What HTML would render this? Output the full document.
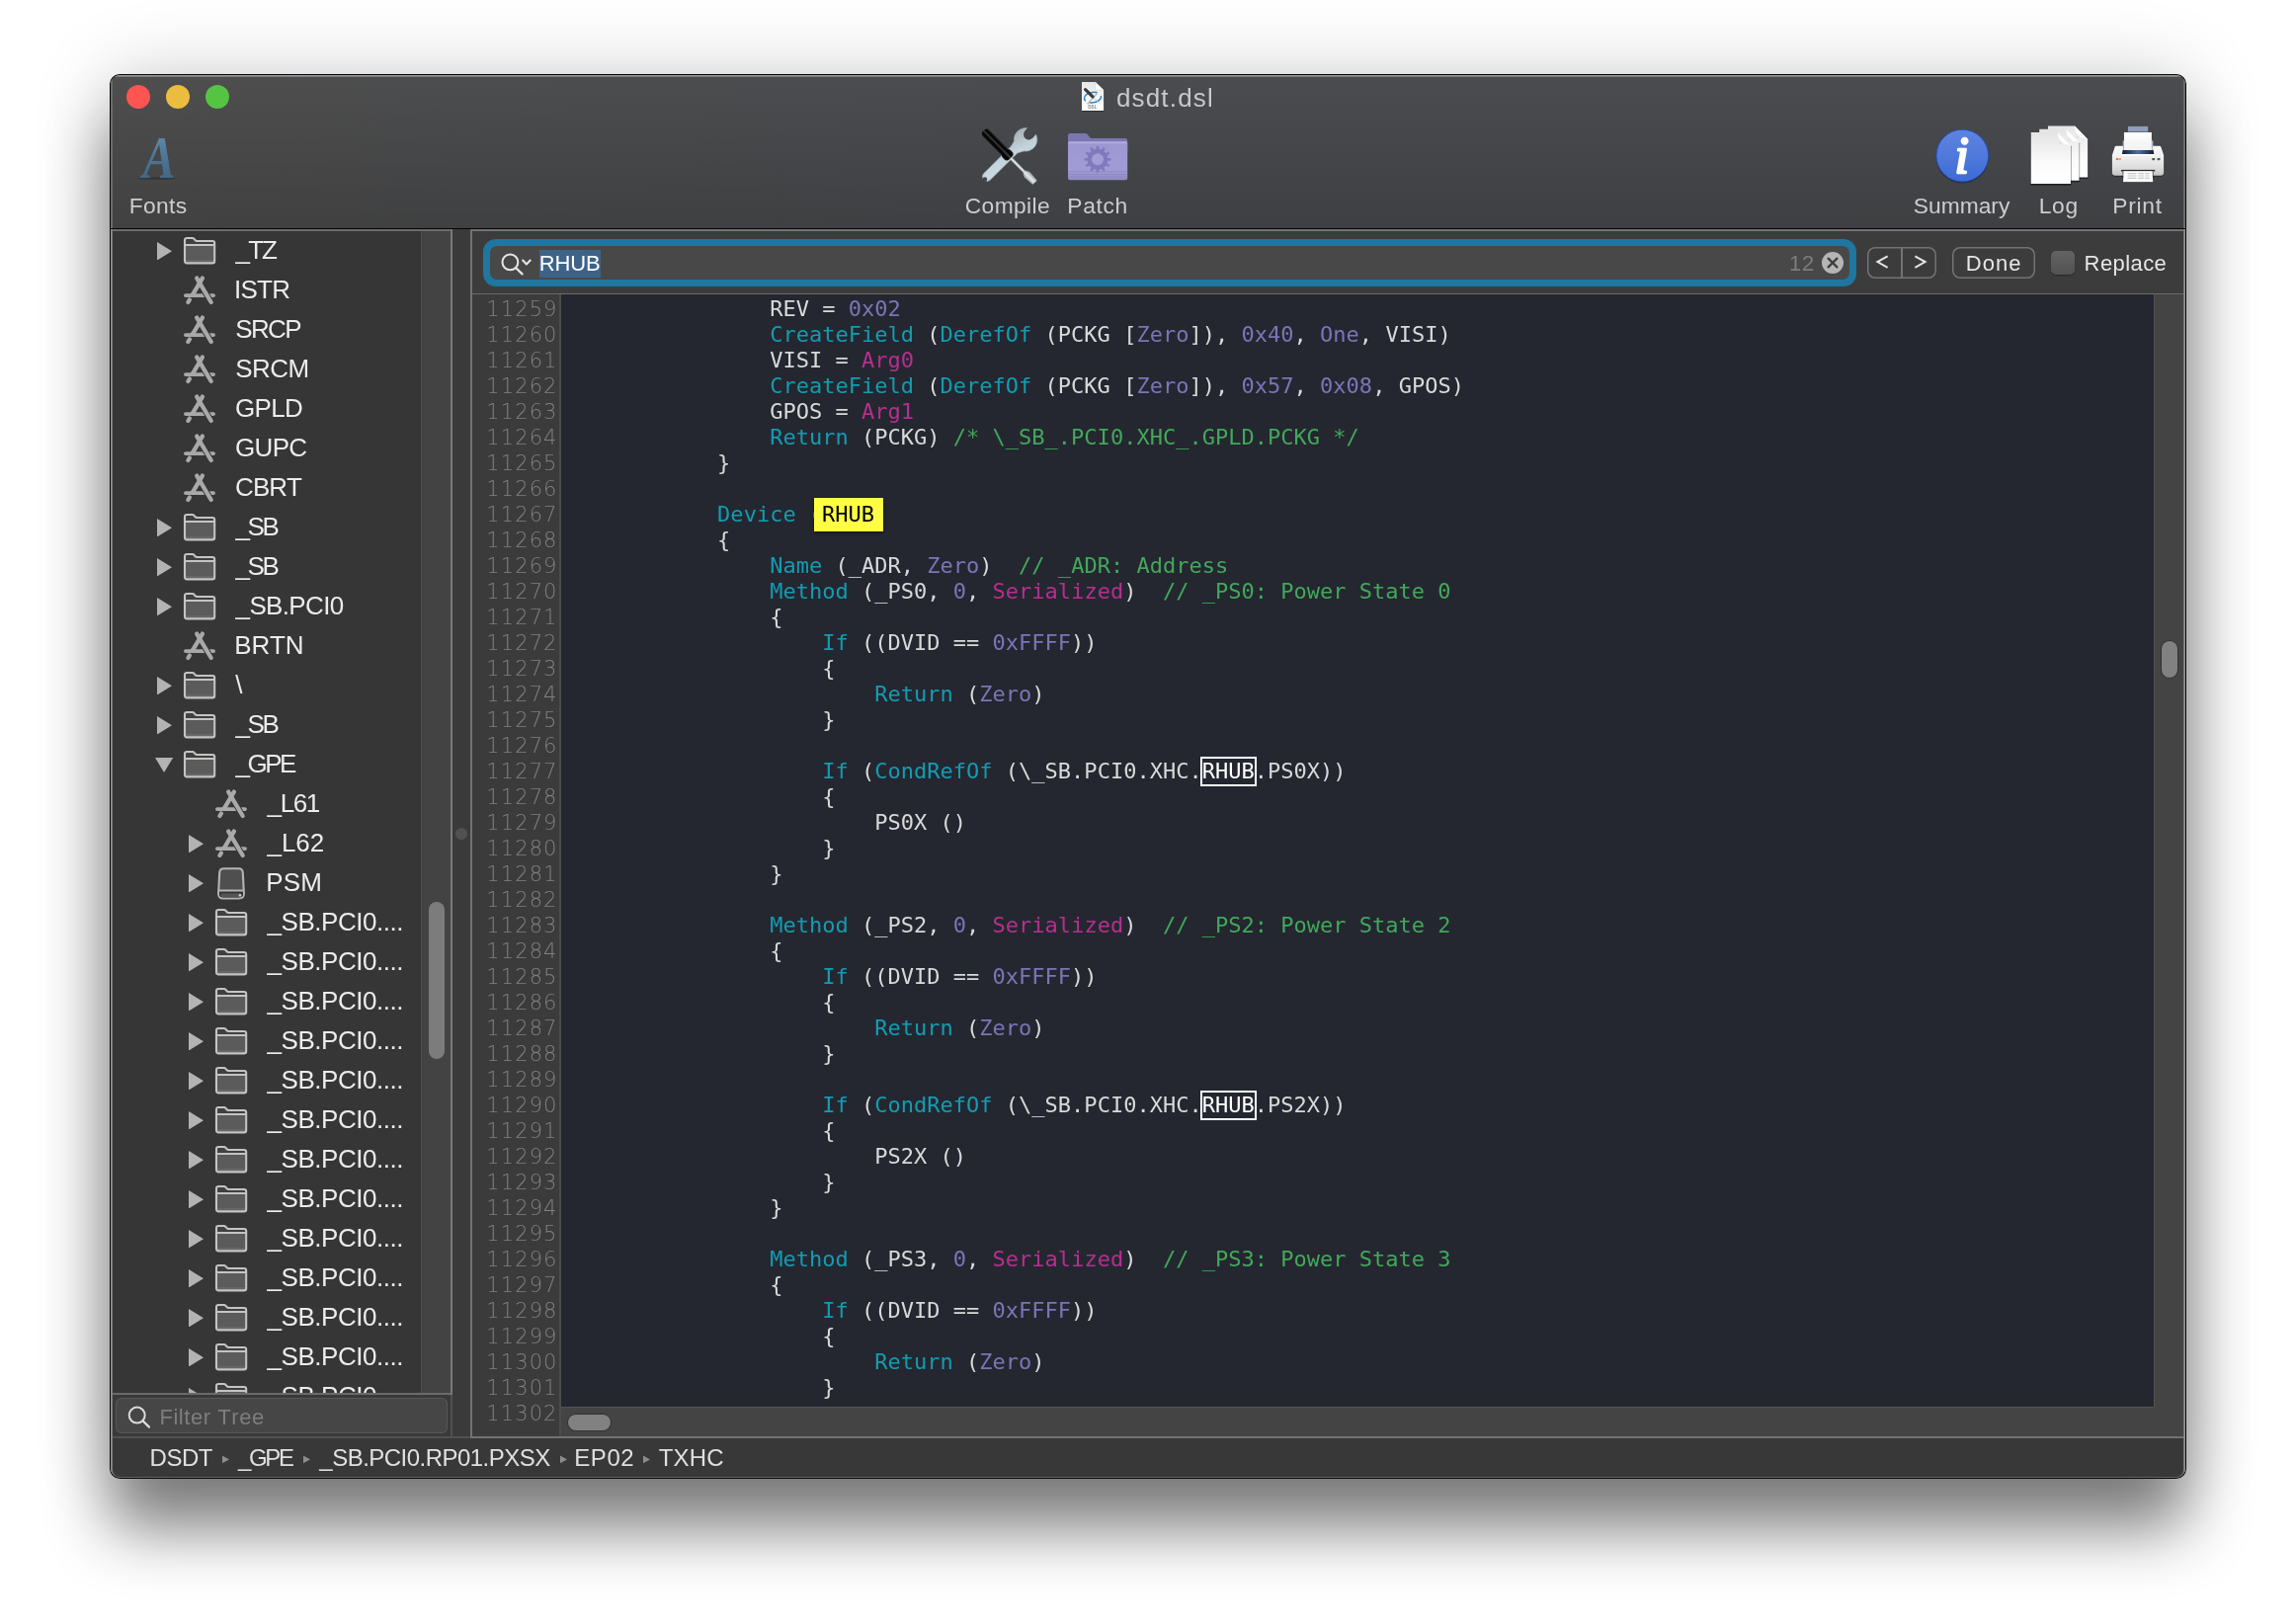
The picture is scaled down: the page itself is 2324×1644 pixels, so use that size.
<!DOCTYPE html>
<html lang="en"><head><meta charset="utf-8"><title>dsdt.dsl</title>
<style>
html,body{margin:0;padding:0}
body{width:2324px;height:1644px;background:#fff;position:relative;overflow:hidden;font-family:"Liberation Sans",sans-serif}
.t{position:absolute;white-space:pre;line-height:1;font-kerning:none;font-family:"Liberation Sans",sans-serif}
#shadow{position:absolute;left:111px;top:75px;width:2102px;height:1422px;border-radius:10px;
 box-shadow:0 52px 64px rgba(0,0,0,.47),0 0 78px rgba(0,0,0,.19)}
#win{will-change:transform;position:absolute;left:111px;top:75px;width:2102px;height:1422px;border-radius:10px;overflow:hidden;background:#060606}
#in{position:absolute;left:-111px;top:-75px;width:2324px;height:1644px}
#chrome{position:absolute;left:112px;top:76px;width:2100px;height:1420px;border-radius:9px;overflow:hidden;background:#383838}
#c2{position:absolute;left:-112px;top:-76px;width:2324px;height:1644px}
.code{position:absolute;left:567px;top:300px;margin:0;font-family:"DejaVu Sans Mono","Liberation Mono",monospace;font-size:22px;line-height:26px;color:#d9d9d9;white-space:pre;font-kerning:none;letter-spacing:.013px}
.k{color:#129cb2}.n{color:#7c74b6}.m{color:#b62f8e}.c{color:#42a85a}
.ln{position:absolute;left:478px;top:300px;width:86.6px;margin:0;text-align:right;font-family:"DejaVu Sans","Liberation Sans",sans-serif;font-weight:200;font-size:21px;line-height:26px;color:#808080;letter-spacing:1.1px;white-space:pre}
.hl{outline:2px solid #fff;color:#fff;padding-bottom:1px}
</style></head><body>
<div id="shadow"></div>
<div id="win"><div id="in"><div id="chrome"><div id="c2">

<div style="position:absolute;left:112px;top:76px;width:2100px;height:155px;background:linear-gradient(rgba(0,0,0,0),rgba(0,0,0,.17)),linear-gradient(90deg,#4e4e4e 0%,#4c4d4f 25%,#4a4c50 45%,#4b4c4f 100%);"></div>
<div style="position:absolute;left:112px;top:76px;width:2100px;height:1px;background:#96989a;"></div>
<div style="position:absolute;left:112px;top:77px;width:2100px;height:1px;background:#7a7c7f;"></div>
<div style="position:absolute;left:112px;top:231px;width:2100px;height:1px;background:#050505;"></div>
<div style="position:absolute;left:128px;top:86px;width:24px;height:24px;border-radius:50%;background:#fe5552"></div>
<div style="position:absolute;left:168px;top:86px;width:24px;height:24px;border-radius:50%;background:#ebbd3f"></div>
<div style="position:absolute;left:208px;top:86px;width:24px;height:24px;border-radius:50%;background:#55c443"></div>
<span class="t " style="left:1129.91px;top:85.99px;font-size:26px;letter-spacing:1.175px;color:#c9c9c9;">dsdt.dsl</span>
<span class="t " style="left:130.63px;top:197.00px;font-size:22.8px;letter-spacing:0.368px;color:#cdcdcd;">Fonts</span>
<span class="t " style="left:976.74px;top:197.00px;font-size:22.8px;letter-spacing:0.390px;color:#cdcdcd;">Compile</span>
<span class="t " style="left:1080.33px;top:197.00px;font-size:22.8px;letter-spacing:0.637px;color:#cdcdcd;">Patch</span>
<span class="t " style="left:1936.86px;top:197.00px;font-size:22.8px;letter-spacing:-0.011px;color:#cdcdcd;">Summary</span>
<span class="t " style="left:2063.83px;top:197.00px;font-size:22.8px;letter-spacing:0.600px;color:#cdcdcd;">Log</span>
<span class="t " style="left:2138.33px;top:197.00px;font-size:22.8px;letter-spacing:0.714px;color:#cdcdcd;">Print</span>
<svg style="position:absolute;left:120px;top:124px;overflow:visible" width="80" height="70" viewBox="120 124 80 70">
<defs><linearGradient id="gA" x1="0" y1="0" x2="0" y2="1"><stop offset="0" stop-color="#6d93b0"/><stop offset=".45" stop-color="#4f7899"/><stop offset="1" stop-color="#3a5d7c"/></linearGradient></defs>
<ellipse cx="158.5" cy="180.6" rx="19" ry="1.2" fill="#000" opacity=".22"/>
<text transform="translate(144.4 180.2) scale(.802 1)" x="0" y="0" font-family="Liberation Serif, serif" font-style="italic" font-weight="bold" font-size="61.8" fill="url(#gA)" style="font-kerning:none">A</text></svg>
<svg style="position:absolute;left:1093px;top:81px;overflow:visible" width="27" height="33" viewBox="1093 81 27 33">
<defs><linearGradient id="gD" x1="0" y1="0" x2="0" y2="1"><stop offset="0" stop-color="#e6e6e6"/><stop offset=".55" stop-color="#f6f6f6"/><stop offset="1" stop-color="#fff"/></linearGradient></defs>
<path d="M1095 82.9H1108.6L1117.1 91.2V112.1H1095Z" fill="#000" opacity=".35" transform="translate(0 .8)"/>
<path d="M1095 82.9H1108.6L1117.1 91.2V112.1H1095Z" fill="url(#gD)"/>
<path d="M1108.6 82.9L1117.1 91.2H1110Q1108.6 91.2 1108.6 89.8Z" fill="#fff" stroke="#c9c9c9" stroke-width=".5"/>
<ellipse cx="1106" cy="98.6" rx="8.6" ry="5.2" fill="none" stroke="#2b86c8" stroke-width="1.5" transform="rotate(-8 1106 98.6)" stroke-dasharray="15 4 19 5"/>
<path d="M1100.6 105.2L1110.6 94.6" stroke="#b9bcc2" stroke-width="1.5"/>
<path d="M1106.6 98.6L1113.4 104.8" stroke="#c9c9c9" stroke-width="1"/>
<path d="M1098.6 90.6L1106 97.9" stroke="#3a3a3c" stroke-width="3.2" stroke-linecap="round"/>
<text x="1105.9" y="110.3" text-anchor="middle" font-family="Liberation Sans, sans-serif" font-weight="bold" font-size="4.6" fill="#8a8a8a">DSL</text></svg>
<svg style="position:absolute;left:991.5px;top:128.5px;overflow:visible" width="58" height="58" viewBox="0 0 58 58">
<defs>
<linearGradient id="gW" x1="1" y1="0" x2="0" y2="1"><stop offset="0" stop-color="#cfe0e8"/><stop offset=".55" stop-color="#c1d2da"/><stop offset="1" stop-color="#a3acb0"/></linearGradient>
<linearGradient id="gH" x1="0" y1="0" x2="0" y2="1"><stop offset="0" stop-color="#1c1c1c"/><stop offset=".3" stop-color="#000"/><stop offset=".5" stop-color="#3c3c3c"/><stop offset=".7" stop-color="#000"/><stop offset="1" stop-color="#151515"/></linearGradient>
<linearGradient id="gS" x1="0" y1="0" x2="0" y2="1"><stop offset="0" stop-color="#9aa3aa"/><stop offset=".5" stop-color="#e4e8ea"/><stop offset="1" stop-color="#a5abb0"/></linearGradient>
<mask id="mW"><rect x="-20" y="-20" width="100" height="100" fill="#fff"/><g transform="translate(45.5 11.8) rotate(-50)"><circle cx="6" cy="0" r="5.3" fill="#000"/><rect x="6" y="-5.3" width="14" height="10.6" fill="#000"/></g><circle cx="4.9" cy="52.6" r="2.3" fill="#000"/></mask>
</defs>
<g mask="url(#mW)" stroke="#8fa0a8" stroke-width=".6">
<g transform="translate(45.5 11.8) rotate(135.3)">
<path d="M0 -11.8A11.8 11.8 0 0 1 9.4 -7.1L15.5 -3.9H54A4.7 4.7 0 0 1 54 5.5H15.5L9.4 7.1A11.8 11.8 0 1 1 0 -11.8Z" fill="url(#gW)" transform="translate(0 -.8)"/>
</g></g>
<g transform="translate(4.6 4.3) rotate(45.3)">
<rect x="35" y="-1.5" width="24" height="3" fill="url(#gS)"/>
<path d="M57 -1.5L61 -3.7L72.4 -3V3L61 3.7L57 1.5Z" fill="url(#gS)" stroke="#8e959a" stroke-width=".4"/>
<rect x="-1.5" y="-4.5" width="33" height="9" rx="4" fill="url(#gH)"/>
<rect x="28.5" y="-5.6" width="9" height="11.2" rx="3.6" fill="url(#gH)"/>
</g></svg>
<svg style="position:absolute;left:1080.9px;top:134.8px;overflow:visible" width="60.2" height="47.3" viewBox="0 0 60.2 47.3">
<defs><linearGradient id="gF" x1="0" y1="0" x2="0" y2="1"><stop offset="0" stop-color="#a9a4dc"/><stop offset=".08" stop-color="#9d98d1"/><stop offset=".75" stop-color="#a19cd6"/><stop offset="1" stop-color="#918cc6"/></linearGradient></defs>
<path d="M0 2.2Q0 0 2.2 0H17.6Q18.8 0 19.7 .9L22.6 4.4Q23.3 5.1 24.5 5.1H58Q60.2 5.1 60.2 7.3V20H0Z" fill="#7c76b1"/>
<path d="M0 10.3Q0 8.3 2 8.3H58.2Q60.2 8.3 60.2 10.3V45.1Q60.2 47.3 58 47.3H2.2Q0 47.3 0 45.1Z" fill="url(#gF)"/>
<path d="M0 38.6H60.2M0 41.4H60.2M0 44.2H60.2" stroke="#8984bf" stroke-width=".9" opacity=".75"/>
<path d="M.6 9.2H59.6" stroke="#b9b5e6" stroke-width="1" opacity=".9"/>
<path d="M28.63 16.19L28.85 12.75L31.15 12.75L31.37 16.19L33.86 16.86L35.78 13.99L37.78 15.14L36.24 18.23L38.07 20.06L41.16 18.52L42.31 20.52L39.44 22.44L40.11 24.93L43.55 25.15L43.55 27.45L40.11 27.67L39.44 30.16L42.31 32.08L41.16 34.08L38.07 32.54L36.24 34.37L37.78 37.46L35.78 38.61L33.86 35.74L31.37 36.41L31.15 39.85L28.85 39.85L28.63 36.41L26.14 35.74L24.22 38.61L22.22 37.46L23.76 34.37L21.93 32.54L18.84 34.08L17.69 32.08L20.56 30.16L19.89 27.67L16.45 27.45L16.45 25.15L19.89 24.93L20.56 22.44L17.69 20.52L18.84 18.52L21.93 20.06L23.76 18.23L22.22 15.14L24.22 13.99L26.14 16.86Z" fill="#8179bd"/><circle cx="30" cy="26.3" r="10.4" fill="#8179bd"/>
<circle cx="30" cy="26.3" r="6" fill="#a29dd7"/>
</svg>
<svg style="position:absolute;left:1955px;top:126px;overflow:visible" width="64" height="64" viewBox="1955 126 64 64">
<defs><linearGradient id="gI" x1="0" y1="0" x2="0" y2="1"><stop offset="0" stop-color="#5d84e0"/><stop offset=".5" stop-color="#5079db"/><stop offset="1" stop-color="#3b6bd6"/></linearGradient></defs>
<ellipse cx="1986.3" cy="159.2" rx="26.6" ry="26.4" fill="#000" opacity=".35"/>
<circle cx="1986.3" cy="157.6" r="26.4" fill="url(#gI)" stroke="#1f4dbd" stroke-width=".9"/>
<text x="1978.4" y="175.4" font-family="Liberation Serif, serif" font-style="italic" font-size="52" fill="#fff" stroke="#fff" stroke-width="2.3" stroke-linejoin="round">i</text></svg>
<svg style="position:absolute;left:2050px;top:122px;overflow:visible" width="70" height="70" viewBox="2050 122 70 70">
<defs><linearGradient id="gP" x1="0" y1="0" x2="0" y2="1"><stop offset="0" stop-color="#e4e4e4"/><stop offset=".6" stop-color="#fbfbfb"/><stop offset="1" stop-color="#fff"/></linearGradient>
<linearGradient id="gE" x1="0" y1="1" x2="1" y2="0"><stop offset="0" stop-color="#b8b8b8"/><stop offset=".35" stop-color="#fff"/><stop offset="1" stop-color="#f2f2f2"/></linearGradient></defs>
<g transform="translate(2072.9 127.6)"><path d="M0 0H27.2L40.3 13.4V52H0Z" fill="#000" opacity=".5" transform="translate(-.6 .9) scale(1.03 1.012)"/><path d="M0 0H27.2L40.3 13.4V52H0Z" fill="url(#gP)"/><path d="M27.2 0L40.3 13.4Q33 11.6 29.6 12.4Q27.6 7 27.2 0Z" fill="url(#gE)"/></g><g transform="translate(2064.2 130.7)"><path d="M0 0H27.2L40.3 13.4V52H0Z" fill="#000" opacity=".5" transform="translate(-.6 .9) scale(1.03 1.012)"/><path d="M0 0H27.2L40.3 13.4V52H0Z" fill="url(#gP)"/><path d="M27.2 0L40.3 13.4Q33 11.6 29.6 12.4Q27.6 7 27.2 0Z" fill="url(#gE)"/></g><g transform="translate(2055.7 133.9)"><path d="M0 0H27.2L40.3 13.4V52H0Z" fill="#000" opacity=".5" transform="translate(-.6 .9) scale(1.03 1.012)"/><path d="M0 0H27.2L40.3 13.4V52H0Z" fill="url(#gP)"/><path d="M27.2 0L40.3 13.4Q33 11.6 29.6 12.4Q27.6 7 27.2 0Z" fill="url(#gE)"/></g></svg>
<svg style="position:absolute;left:2130px;top:122px;overflow:visible" width="70" height="70" viewBox="2130 122 70 70">
<defs>
<linearGradient id="gB" x1="0" y1="0" x2="0" y2="1"><stop offset="0" stop-color="#fafafa"/><stop offset=".35" stop-color="#f1f1f1"/><stop offset=".75" stop-color="#dcdcdc"/><stop offset="1" stop-color="#c4c4c4"/></linearGradient>
<linearGradient id="gSl" x1="0" y1="0" x2="1" y2="0"><stop offset="0" stop-color="#141c2e"/><stop offset=".5" stop-color="#4e70a2"/><stop offset="1" stop-color="#141c2e"/></linearGradient>
<linearGradient id="gPa" x1="0" y1="0" x2="0" y2="1"><stop offset="0" stop-color="#fff"/><stop offset="1" stop-color="#f1f1f1"/></linearGradient>
</defs>
<rect x="2153.9" y="127.9" width="20.3" height="8" fill="#8f9cbc"/>
<path d="M2141 147.9Q2141 147.7 2142.4 147.7H2185.6Q2187 147.7 2187.4 149L2190.1 157V174.7Q2190.1 177.7 2187.1 177.7H2140.9Q2137.9 177.7 2137.9 174.7V157L2140.6 149Q2140.8 147.9 2141 147.9Z" fill="#000" opacity=".4" transform="translate(0 1)"/>
<path d="M2141 147.9Q2141 147.7 2142.4 147.7H2185.6Q2187 147.7 2187.4 149L2190.1 157V174.7Q2190.1 177.7 2187.1 177.7H2140.9Q2137.9 177.7 2137.9 174.7V157L2140.6 149Q2140.8 147.9 2141 147.9Z" fill="url(#gB)"/>
<rect x="2148.8" y="142.4" width="1.6" height="10" fill="#b9c5da"/><rect x="2177.7" y="142.4" width="1.6" height="10" fill="#b9c5da"/>
<rect x="2149.7" y="133.6" width="28.4" height="18.6" fill="#000" opacity=".55" transform="translate(0 -.6)"/>
<rect x="2149.9" y="133.8" width="28" height="18.3" fill="url(#gPa)"/>
<path d="M2148.6 152.1H2179.6L2180.2 156H2148Z" fill="url(#gSl)"/>
<path d="M2147.3 156H2180.9V157.4H2147.3Z" fill="#fff" opacity=".9"/>
<rect x="2141.9" y="160.1" width="2.4" height="2" fill="#ee6a4c"/><rect x="2144.7" y="160.1" width="2.2" height="2" fill="#f3a338"/>
<rect x="2178.2" y="160" width="3" height="2.2" rx=".8" fill="#555"/><rect x="2183.5" y="160" width="3" height="2.2" rx=".8" fill="#555"/>
<rect x="2146.9" y="171.9" width="34.3" height="1.6" fill="#2a2a2a"/>
<path d="M2148.2 173.4H2180L2179.3 184.2H2149Z" fill="#000" opacity=".45" transform="translate(0 .7)"/>
<path d="M2149.6 173.2H2178.6L2179.3 184.2H2149Z" fill="#fcfcfc"/>
<path d="M2153.6 175.6H2175.6M2153.6 178H2175.6M2153.6 180.4H2175.6" stroke="#c9c9c9" stroke-width="1.1" stroke-dasharray="9 1.5 6 1 5"/>
</svg>
<div style="position:absolute;left:114px;top:232px;width:344px;height:1180px;background:#363636;"></div>
<div style="position:absolute;left:426px;top:234px;width:1px;height:1176px;background:#4d4d4d;"></div>
<div style="position:absolute;left:427px;top:234px;width:29px;height:1176px;background:#434343;"></div>
<div style="position:absolute;left:112px;top:232px;width:346px;height:2px;background:#6b6b6b;"></div>
<div style="position:absolute;left:112px;top:1410px;width:346px;height:2px;background:#6b6b6b;"></div>
<div style="position:absolute;left:456px;top:232px;width:2px;height:1180px;background:#7a7a7a;"></div>
<div style="position:absolute;left:434px;top:913px;width:16px;height:159px;background:#7c7c7c;border-radius:8px;"></div>
<div style="position:absolute;left:114px;top:234px;width:312px;height:1176px;overflow:hidden"><div style="position:absolute;left:-114px;top:-234px">
<svg style="position:absolute;left:158.7px;top:244.75px" width="15.2" height="18.5" viewBox="0 0 15.2 18.5"><path d="M0 0L15.2 9.25L0 18.5Z" fill="#b3b3b3"/></svg>
<svg style="position:absolute;left:185.9px;top:240px;overflow:visible" width="32.2" height="27.4" viewBox="0 0 32.2 27.4"><path d="M1 3.2Q1 1 3.2 1H8.6Q9.8 1 10.5 1.9L11.7 3.3Q12.3 4 13.4 4H29Q31.2 4 31.2 6.2V24.2Q31.2 26.4 29 26.4H3.2Q1 26.4 1 24.2Z" fill="#40403e"/><path d="M1.6 8H30.6V24.2Q30.6 25.8 29 25.8H3.2Q1.6 25.8 1.6 24.2Z" fill="#5b5b5b"/><path d="M2 23H30.2V25.4H2Z" fill="#676767"/><path d="M1 8H31.2" stroke="#c4c4c4" stroke-width="2"/><path d="M1 3.2Q1 1 3.2 1H8.6Q9.8 1 10.5 1.9L11.7 3.3Q12.3 4 13.4 4H29Q31.2 4 31.2 6.2V24.2Q31.2 26.4 29 26.4H3.2Q1 26.4 1 24.2Z" fill="none" stroke="#c4c4c4" stroke-width="2.1" stroke-linejoin="round"/></svg>
<span class="t " style="left:238.59px;top:239.99px;font-size:26px;letter-spacing:-1.902px;color:#ececec;">_TZ</span>
<svg style="position:absolute;left:186px;top:279px;overflow:visible" width="32" height="30" viewBox="0 0 32 30"><g stroke-linecap="round" fill="none"><path d="M1.95 20.1H30" stroke="#a9a9a9" stroke-width="3.9"/><path d="M16.4 8L27.7 27" stroke="#363636" stroke-width="6.2" stroke-linecap="butt"/><path d="M13.2 2.6L27.7 27" stroke="#a9a9a9" stroke-width="4.3"/><path d="M18.9 2.6L9.7 18.1M5.9 24.5L4.4 27" stroke="#a9a9a9" stroke-width="4.3"/><path d="M9.7 18.1L8.6 20.1" stroke="#a9a9a9" stroke-width="4.3" stroke-linecap="butt"/></g></svg>
<span class="t " style="left:237.00px;top:279.99px;font-size:26px;letter-spacing:-0.773px;color:#ececec;">ISTR</span>
<svg style="position:absolute;left:186px;top:319px;overflow:visible" width="32" height="30" viewBox="0 0 32 30"><g stroke-linecap="round" fill="none"><path d="M1.95 20.1H30" stroke="#a9a9a9" stroke-width="3.9"/><path d="M16.4 8L27.7 27" stroke="#363636" stroke-width="6.2" stroke-linecap="butt"/><path d="M13.2 2.6L27.7 27" stroke="#a9a9a9" stroke-width="4.3"/><path d="M18.9 2.6L9.7 18.1M5.9 24.5L4.4 27" stroke="#a9a9a9" stroke-width="4.3"/><path d="M9.7 18.1L8.6 20.1" stroke="#a9a9a9" stroke-width="4.3" stroke-linecap="butt"/></g></svg>
<span class="t " style="left:238.22px;top:319.99px;font-size:26px;letter-spacing:-1.628px;color:#ececec;">SRCP</span>
<svg style="position:absolute;left:186px;top:359px;overflow:visible" width="32" height="30" viewBox="0 0 32 30"><g stroke-linecap="round" fill="none"><path d="M1.95 20.1H30" stroke="#a9a9a9" stroke-width="3.9"/><path d="M16.4 8L27.7 27" stroke="#363636" stroke-width="6.2" stroke-linecap="butt"/><path d="M13.2 2.6L27.7 27" stroke="#a9a9a9" stroke-width="4.3"/><path d="M18.9 2.6L9.7 18.1M5.9 24.5L4.4 27" stroke="#a9a9a9" stroke-width="4.3"/><path d="M9.7 18.1L8.6 20.1" stroke="#a9a9a9" stroke-width="4.3" stroke-linecap="butt"/></g></svg>
<span class="t " style="left:238.22px;top:359.99px;font-size:26px;letter-spacing:-0.546px;color:#ececec;">SRCM</span>
<svg style="position:absolute;left:186px;top:399px;overflow:visible" width="32" height="30" viewBox="0 0 32 30"><g stroke-linecap="round" fill="none"><path d="M1.95 20.1H30" stroke="#a9a9a9" stroke-width="3.9"/><path d="M16.4 8L27.7 27" stroke="#363636" stroke-width="6.2" stroke-linecap="butt"/><path d="M13.2 2.6L27.7 27" stroke="#a9a9a9" stroke-width="4.3"/><path d="M18.9 2.6L9.7 18.1M5.9 24.5L4.4 27" stroke="#a9a9a9" stroke-width="4.3"/><path d="M9.7 18.1L8.6 20.1" stroke="#a9a9a9" stroke-width="4.3" stroke-linecap="butt"/></g></svg>
<span class="t " style="left:238.09px;top:399.99px;font-size:26px;letter-spacing:-0.683px;color:#ececec;">GPLD</span>
<svg style="position:absolute;left:186px;top:439px;overflow:visible" width="32" height="30" viewBox="0 0 32 30"><g stroke-linecap="round" fill="none"><path d="M1.95 20.1H30" stroke="#a9a9a9" stroke-width="3.9"/><path d="M16.4 8L27.7 27" stroke="#363636" stroke-width="6.2" stroke-linecap="butt"/><path d="M13.2 2.6L27.7 27" stroke="#a9a9a9" stroke-width="4.3"/><path d="M18.9 2.6L9.7 18.1M5.9 24.5L4.4 27" stroke="#a9a9a9" stroke-width="4.3"/><path d="M9.7 18.1L8.6 20.1" stroke="#a9a9a9" stroke-width="4.3" stroke-linecap="butt"/></g></svg>
<span class="t " style="left:238.09px;top:439.99px;font-size:26px;letter-spacing:-0.707px;color:#ececec;">GUPC</span>
<svg style="position:absolute;left:186px;top:479px;overflow:visible" width="32" height="30" viewBox="0 0 32 30"><g stroke-linecap="round" fill="none"><path d="M1.95 20.1H30" stroke="#a9a9a9" stroke-width="3.9"/><path d="M16.4 8L27.7 27" stroke="#363636" stroke-width="6.2" stroke-linecap="butt"/><path d="M13.2 2.6L27.7 27" stroke="#a9a9a9" stroke-width="4.3"/><path d="M18.9 2.6L9.7 18.1M5.9 24.5L4.4 27" stroke="#a9a9a9" stroke-width="4.3"/><path d="M9.7 18.1L8.6 20.1" stroke="#a9a9a9" stroke-width="4.3" stroke-linecap="butt"/></g></svg>
<span class="t " style="left:238.08px;top:479.99px;font-size:26px;letter-spacing:-0.953px;color:#ececec;">CBRT</span>
<svg style="position:absolute;left:158.7px;top:524.75px" width="15.2" height="18.5" viewBox="0 0 15.2 18.5"><path d="M0 0L15.2 9.25L0 18.5Z" fill="#b3b3b3"/></svg>
<svg style="position:absolute;left:185.9px;top:520px;overflow:visible" width="32.2" height="27.4" viewBox="0 0 32.2 27.4"><path d="M1 3.2Q1 1 3.2 1H8.6Q9.8 1 10.5 1.9L11.7 3.3Q12.3 4 13.4 4H29Q31.2 4 31.2 6.2V24.2Q31.2 26.4 29 26.4H3.2Q1 26.4 1 24.2Z" fill="#40403e"/><path d="M1.6 8H30.6V24.2Q30.6 25.8 29 25.8H3.2Q1.6 25.8 1.6 24.2Z" fill="#5b5b5b"/><path d="M2 23H30.2V25.4H2Z" fill="#676767"/><path d="M1 8H31.2" stroke="#c4c4c4" stroke-width="2"/><path d="M1 3.2Q1 1 3.2 1H8.6Q9.8 1 10.5 1.9L11.7 3.3Q12.3 4 13.4 4H29Q31.2 4 31.2 6.2V24.2Q31.2 26.4 29 26.4H3.2Q1 26.4 1 24.2Z" fill="none" stroke="#c4c4c4" stroke-width="2.1" stroke-linejoin="round"/></svg>
<span class="t " style="left:238.59px;top:519.99px;font-size:26px;letter-spacing:-2.433px;color:#ececec;">_SB</span>
<svg style="position:absolute;left:158.7px;top:564.75px" width="15.2" height="18.5" viewBox="0 0 15.2 18.5"><path d="M0 0L15.2 9.25L0 18.5Z" fill="#b3b3b3"/></svg>
<svg style="position:absolute;left:185.9px;top:560px;overflow:visible" width="32.2" height="27.4" viewBox="0 0 32.2 27.4"><path d="M1 3.2Q1 1 3.2 1H8.6Q9.8 1 10.5 1.9L11.7 3.3Q12.3 4 13.4 4H29Q31.2 4 31.2 6.2V24.2Q31.2 26.4 29 26.4H3.2Q1 26.4 1 24.2Z" fill="#40403e"/><path d="M1.6 8H30.6V24.2Q30.6 25.8 29 25.8H3.2Q1.6 25.8 1.6 24.2Z" fill="#5b5b5b"/><path d="M2 23H30.2V25.4H2Z" fill="#676767"/><path d="M1 8H31.2" stroke="#c4c4c4" stroke-width="2"/><path d="M1 3.2Q1 1 3.2 1H8.6Q9.8 1 10.5 1.9L11.7 3.3Q12.3 4 13.4 4H29Q31.2 4 31.2 6.2V24.2Q31.2 26.4 29 26.4H3.2Q1 26.4 1 24.2Z" fill="none" stroke="#c4c4c4" stroke-width="2.1" stroke-linejoin="round"/></svg>
<span class="t " style="left:238.59px;top:559.99px;font-size:26px;letter-spacing:-2.433px;color:#ececec;">_SB</span>
<svg style="position:absolute;left:158.7px;top:604.75px" width="15.2" height="18.5" viewBox="0 0 15.2 18.5"><path d="M0 0L15.2 9.25L0 18.5Z" fill="#b3b3b3"/></svg>
<svg style="position:absolute;left:185.9px;top:600px;overflow:visible" width="32.2" height="27.4" viewBox="0 0 32.2 27.4"><path d="M1 3.2Q1 1 3.2 1H8.6Q9.8 1 10.5 1.9L11.7 3.3Q12.3 4 13.4 4H29Q31.2 4 31.2 6.2V24.2Q31.2 26.4 29 26.4H3.2Q1 26.4 1 24.2Z" fill="#40403e"/><path d="M1.6 8H30.6V24.2Q30.6 25.8 29 25.8H3.2Q1.6 25.8 1.6 24.2Z" fill="#5b5b5b"/><path d="M2 23H30.2V25.4H2Z" fill="#676767"/><path d="M1 8H31.2" stroke="#c4c4c4" stroke-width="2"/><path d="M1 3.2Q1 1 3.2 1H8.6Q9.8 1 10.5 1.9L11.7 3.3Q12.3 4 13.4 4H29Q31.2 4 31.2 6.2V24.2Q31.2 26.4 29 26.4H3.2Q1 26.4 1 24.2Z" fill="none" stroke="#c4c4c4" stroke-width="2.1" stroke-linejoin="round"/></svg>
<span class="t " style="left:238.59px;top:599.99px;font-size:26px;letter-spacing:-0.650px;color:#ececec;">_SB.PCI0</span>
<svg style="position:absolute;left:186px;top:639px;overflow:visible" width="32" height="30" viewBox="0 0 32 30"><g stroke-linecap="round" fill="none"><path d="M1.95 20.1H30" stroke="#a9a9a9" stroke-width="3.9"/><path d="M16.4 8L27.7 27" stroke="#363636" stroke-width="6.2" stroke-linecap="butt"/><path d="M13.2 2.6L27.7 27" stroke="#a9a9a9" stroke-width="4.3"/><path d="M18.9 2.6L9.7 18.1M5.9 24.5L4.4 27" stroke="#a9a9a9" stroke-width="4.3"/><path d="M9.7 18.1L8.6 20.1" stroke="#a9a9a9" stroke-width="4.3" stroke-linecap="butt"/></g></svg>
<span class="t " style="left:237.27px;top:639.99px;font-size:26px;letter-spacing:-0.174px;color:#ececec;">BRTN</span>
<svg style="position:absolute;left:158.7px;top:684.75px" width="15.2" height="18.5" viewBox="0 0 15.2 18.5"><path d="M0 0L15.2 9.25L0 18.5Z" fill="#b3b3b3"/></svg>
<svg style="position:absolute;left:185.9px;top:680px;overflow:visible" width="32.2" height="27.4" viewBox="0 0 32.2 27.4"><path d="M1 3.2Q1 1 3.2 1H8.6Q9.8 1 10.5 1.9L11.7 3.3Q12.3 4 13.4 4H29Q31.2 4 31.2 6.2V24.2Q31.2 26.4 29 26.4H3.2Q1 26.4 1 24.2Z" fill="#40403e"/><path d="M1.6 8H30.6V24.2Q30.6 25.8 29 25.8H3.2Q1.6 25.8 1.6 24.2Z" fill="#5b5b5b"/><path d="M2 23H30.2V25.4H2Z" fill="#676767"/><path d="M1 8H31.2" stroke="#c4c4c4" stroke-width="2"/><path d="M1 3.2Q1 1 3.2 1H8.6Q9.8 1 10.5 1.9L11.7 3.3Q12.3 4 13.4 4H29Q31.2 4 31.2 6.2V24.2Q31.2 26.4 29 26.4H3.2Q1 26.4 1 24.2Z" fill="none" stroke="#c4c4c4" stroke-width="2.1" stroke-linejoin="round"/></svg>
<span class="t " style="left:238.20px;top:679.99px;font-size:26px;letter-spacing:0.000px;color:#ececec;">\</span>
<svg style="position:absolute;left:158.7px;top:724.75px" width="15.2" height="18.5" viewBox="0 0 15.2 18.5"><path d="M0 0L15.2 9.25L0 18.5Z" fill="#b3b3b3"/></svg>
<svg style="position:absolute;left:185.9px;top:720px;overflow:visible" width="32.2" height="27.4" viewBox="0 0 32.2 27.4"><path d="M1 3.2Q1 1 3.2 1H8.6Q9.8 1 10.5 1.9L11.7 3.3Q12.3 4 13.4 4H29Q31.2 4 31.2 6.2V24.2Q31.2 26.4 29 26.4H3.2Q1 26.4 1 24.2Z" fill="#40403e"/><path d="M1.6 8H30.6V24.2Q30.6 25.8 29 25.8H3.2Q1.6 25.8 1.6 24.2Z" fill="#5b5b5b"/><path d="M2 23H30.2V25.4H2Z" fill="#676767"/><path d="M1 8H31.2" stroke="#c4c4c4" stroke-width="2"/><path d="M1 3.2Q1 1 3.2 1H8.6Q9.8 1 10.5 1.9L11.7 3.3Q12.3 4 13.4 4H29Q31.2 4 31.2 6.2V24.2Q31.2 26.4 29 26.4H3.2Q1 26.4 1 24.2Z" fill="none" stroke="#c4c4c4" stroke-width="2.1" stroke-linejoin="round"/></svg>
<span class="t " style="left:238.59px;top:719.99px;font-size:26px;letter-spacing:-2.433px;color:#ececec;">_SB</span>
<svg style="position:absolute;left:157px;top:766.7px" width="18.1" height="15" viewBox="0 0 18.1 15"><path d="M0 0H18.1L9.05 15Z" fill="#b3b3b3"/></svg>
<svg style="position:absolute;left:185.9px;top:760px;overflow:visible" width="32.2" height="27.4" viewBox="0 0 32.2 27.4"><path d="M1 3.2Q1 1 3.2 1H8.6Q9.8 1 10.5 1.9L11.7 3.3Q12.3 4 13.4 4H29Q31.2 4 31.2 6.2V24.2Q31.2 26.4 29 26.4H3.2Q1 26.4 1 24.2Z" fill="#40403e"/><path d="M1.6 8H30.6V24.2Q30.6 25.8 29 25.8H3.2Q1.6 25.8 1.6 24.2Z" fill="#5b5b5b"/><path d="M2 23H30.2V25.4H2Z" fill="#676767"/><path d="M1 8H31.2" stroke="#c4c4c4" stroke-width="2"/><path d="M1 3.2Q1 1 3.2 1H8.6Q9.8 1 10.5 1.9L11.7 3.3Q12.3 4 13.4 4H29Q31.2 4 31.2 6.2V24.2Q31.2 26.4 29 26.4H3.2Q1 26.4 1 24.2Z" fill="none" stroke="#c4c4c4" stroke-width="2.1" stroke-linejoin="round"/></svg>
<span class="t " style="left:238.59px;top:759.99px;font-size:26px;letter-spacing:-2.548px;color:#ececec;">_GPE</span>
<svg style="position:absolute;left:218px;top:799px;overflow:visible" width="32" height="30" viewBox="0 0 32 30"><g stroke-linecap="round" fill="none"><path d="M1.95 20.1H30" stroke="#a9a9a9" stroke-width="3.9"/><path d="M16.4 8L27.7 27" stroke="#363636" stroke-width="6.2" stroke-linecap="butt"/><path d="M13.2 2.6L27.7 27" stroke="#a9a9a9" stroke-width="4.3"/><path d="M18.9 2.6L9.7 18.1M5.9 24.5L4.4 27" stroke="#a9a9a9" stroke-width="4.3"/><path d="M9.7 18.1L8.6 20.1" stroke="#a9a9a9" stroke-width="4.3" stroke-linecap="butt"/></g></svg>
<span class="t " style="left:270.59px;top:799.99px;font-size:26px;letter-spacing:-1.388px;color:#ececec;">_L61</span>
<svg style="position:absolute;left:190.7px;top:844.75px" width="15.2" height="18.5" viewBox="0 0 15.2 18.5"><path d="M0 0L15.2 9.25L0 18.5Z" fill="#b3b3b3"/></svg>
<svg style="position:absolute;left:218px;top:839px;overflow:visible" width="32" height="30" viewBox="0 0 32 30"><g stroke-linecap="round" fill="none"><path d="M1.95 20.1H30" stroke="#a9a9a9" stroke-width="3.9"/><path d="M16.4 8L27.7 27" stroke="#363636" stroke-width="6.2" stroke-linecap="butt"/><path d="M13.2 2.6L27.7 27" stroke="#a9a9a9" stroke-width="4.3"/><path d="M18.9 2.6L9.7 18.1M5.9 24.5L4.4 27" stroke="#a9a9a9" stroke-width="4.3"/><path d="M9.7 18.1L8.6 20.1" stroke="#a9a9a9" stroke-width="4.3" stroke-linecap="butt"/></g></svg>
<span class="t " style="left:270.59px;top:839.99px;font-size:26px;letter-spacing:-0.109px;color:#ececec;">_L62</span>
<svg style="position:absolute;left:190.7px;top:884.75px" width="15.2" height="18.5" viewBox="0 0 15.2 18.5"><path d="M0 0L15.2 9.25L0 18.5Z" fill="#b3b3b3"/></svg>
<svg style="position:absolute;left:220px;top:877.5px;overflow:visible" width="28" height="33" viewBox="0 0 28 33"><path d="M2.2 5.6Q2.4 1.3 6.6 1.3H21.4Q25.6 1.3 25.8 5.6L26.9 26.6Q26.9 31.4 22 31.4H6Q1.1 31.4 1.1 26.6Z" fill="#4f4f4f" stroke="#b4b4b4" stroke-width="2.1"/><path d="M2 24.6H26V27.4Q26 30.4 22 30.4H6Q2 30.4 2 27.4Z" fill="#2f2f2f"/><rect x="3.2" y="26.2" width="21.6" height="3.9" rx="1.8" fill="#555"/><path d="M1.6 23.5H26.4" stroke="#b4b4b4" stroke-width="2"/><rect x="21.7" y="27.2" width="2.5" height="2.2" fill="#d0d0d0"/></svg>
<span class="t " style="left:269.27px;top:879.99px;font-size:26px;letter-spacing:0.112px;color:#ececec;">PSM</span>
<svg style="position:absolute;left:190.7px;top:924.75px" width="15.2" height="18.5" viewBox="0 0 15.2 18.5"><path d="M0 0L15.2 9.25L0 18.5Z" fill="#b3b3b3"/></svg>
<svg style="position:absolute;left:217.9px;top:920px;overflow:visible" width="32.2" height="27.4" viewBox="0 0 32.2 27.4"><path d="M1 3.2Q1 1 3.2 1H8.6Q9.8 1 10.5 1.9L11.7 3.3Q12.3 4 13.4 4H29Q31.2 4 31.2 6.2V24.2Q31.2 26.4 29 26.4H3.2Q1 26.4 1 24.2Z" fill="#40403e"/><path d="M1.6 8H30.6V24.2Q30.6 25.8 29 25.8H3.2Q1.6 25.8 1.6 24.2Z" fill="#5b5b5b"/><path d="M2 23H30.2V25.4H2Z" fill="#676767"/><path d="M1 8H31.2" stroke="#c4c4c4" stroke-width="2"/><path d="M1 3.2Q1 1 3.2 1H8.6Q9.8 1 10.5 1.9L11.7 3.3Q12.3 4 13.4 4H29Q31.2 4 31.2 6.2V24.2Q31.2 26.4 29 26.4H3.2Q1 26.4 1 24.2Z" fill="none" stroke="#c4c4c4" stroke-width="2.1" stroke-linejoin="round"/></svg>
<span class="t " style="left:270.59px;top:919.99px;font-size:26px;letter-spacing:-0.471px;color:#ececec;">_SB.PCI0....</span>
<svg style="position:absolute;left:190.7px;top:964.75px" width="15.2" height="18.5" viewBox="0 0 15.2 18.5"><path d="M0 0L15.2 9.25L0 18.5Z" fill="#b3b3b3"/></svg>
<svg style="position:absolute;left:217.9px;top:960px;overflow:visible" width="32.2" height="27.4" viewBox="0 0 32.2 27.4"><path d="M1 3.2Q1 1 3.2 1H8.6Q9.8 1 10.5 1.9L11.7 3.3Q12.3 4 13.4 4H29Q31.2 4 31.2 6.2V24.2Q31.2 26.4 29 26.4H3.2Q1 26.4 1 24.2Z" fill="#40403e"/><path d="M1.6 8H30.6V24.2Q30.6 25.8 29 25.8H3.2Q1.6 25.8 1.6 24.2Z" fill="#5b5b5b"/><path d="M2 23H30.2V25.4H2Z" fill="#676767"/><path d="M1 8H31.2" stroke="#c4c4c4" stroke-width="2"/><path d="M1 3.2Q1 1 3.2 1H8.6Q9.8 1 10.5 1.9L11.7 3.3Q12.3 4 13.4 4H29Q31.2 4 31.2 6.2V24.2Q31.2 26.4 29 26.4H3.2Q1 26.4 1 24.2Z" fill="none" stroke="#c4c4c4" stroke-width="2.1" stroke-linejoin="round"/></svg>
<span class="t " style="left:270.59px;top:959.99px;font-size:26px;letter-spacing:-0.471px;color:#ececec;">_SB.PCI0....</span>
<svg style="position:absolute;left:190.7px;top:1004.75px" width="15.2" height="18.5" viewBox="0 0 15.2 18.5"><path d="M0 0L15.2 9.25L0 18.5Z" fill="#b3b3b3"/></svg>
<svg style="position:absolute;left:217.9px;top:1000px;overflow:visible" width="32.2" height="27.4" viewBox="0 0 32.2 27.4"><path d="M1 3.2Q1 1 3.2 1H8.6Q9.8 1 10.5 1.9L11.7 3.3Q12.3 4 13.4 4H29Q31.2 4 31.2 6.2V24.2Q31.2 26.4 29 26.4H3.2Q1 26.4 1 24.2Z" fill="#40403e"/><path d="M1.6 8H30.6V24.2Q30.6 25.8 29 25.8H3.2Q1.6 25.8 1.6 24.2Z" fill="#5b5b5b"/><path d="M2 23H30.2V25.4H2Z" fill="#676767"/><path d="M1 8H31.2" stroke="#c4c4c4" stroke-width="2"/><path d="M1 3.2Q1 1 3.2 1H8.6Q9.8 1 10.5 1.9L11.7 3.3Q12.3 4 13.4 4H29Q31.2 4 31.2 6.2V24.2Q31.2 26.4 29 26.4H3.2Q1 26.4 1 24.2Z" fill="none" stroke="#c4c4c4" stroke-width="2.1" stroke-linejoin="round"/></svg>
<span class="t " style="left:270.59px;top:999.99px;font-size:26px;letter-spacing:-0.471px;color:#ececec;">_SB.PCI0....</span>
<svg style="position:absolute;left:190.7px;top:1044.75px" width="15.2" height="18.5" viewBox="0 0 15.2 18.5"><path d="M0 0L15.2 9.25L0 18.5Z" fill="#b3b3b3"/></svg>
<svg style="position:absolute;left:217.9px;top:1040px;overflow:visible" width="32.2" height="27.4" viewBox="0 0 32.2 27.4"><path d="M1 3.2Q1 1 3.2 1H8.6Q9.8 1 10.5 1.9L11.7 3.3Q12.3 4 13.4 4H29Q31.2 4 31.2 6.2V24.2Q31.2 26.4 29 26.4H3.2Q1 26.4 1 24.2Z" fill="#40403e"/><path d="M1.6 8H30.6V24.2Q30.6 25.8 29 25.8H3.2Q1.6 25.8 1.6 24.2Z" fill="#5b5b5b"/><path d="M2 23H30.2V25.4H2Z" fill="#676767"/><path d="M1 8H31.2" stroke="#c4c4c4" stroke-width="2"/><path d="M1 3.2Q1 1 3.2 1H8.6Q9.8 1 10.5 1.9L11.7 3.3Q12.3 4 13.4 4H29Q31.2 4 31.2 6.2V24.2Q31.2 26.4 29 26.4H3.2Q1 26.4 1 24.2Z" fill="none" stroke="#c4c4c4" stroke-width="2.1" stroke-linejoin="round"/></svg>
<span class="t " style="left:270.59px;top:1039.99px;font-size:26px;letter-spacing:-0.471px;color:#ececec;">_SB.PCI0....</span>
<svg style="position:absolute;left:190.7px;top:1084.75px" width="15.2" height="18.5" viewBox="0 0 15.2 18.5"><path d="M0 0L15.2 9.25L0 18.5Z" fill="#b3b3b3"/></svg>
<svg style="position:absolute;left:217.9px;top:1080px;overflow:visible" width="32.2" height="27.4" viewBox="0 0 32.2 27.4"><path d="M1 3.2Q1 1 3.2 1H8.6Q9.8 1 10.5 1.9L11.7 3.3Q12.3 4 13.4 4H29Q31.2 4 31.2 6.2V24.2Q31.2 26.4 29 26.4H3.2Q1 26.4 1 24.2Z" fill="#40403e"/><path d="M1.6 8H30.6V24.2Q30.6 25.8 29 25.8H3.2Q1.6 25.8 1.6 24.2Z" fill="#5b5b5b"/><path d="M2 23H30.2V25.4H2Z" fill="#676767"/><path d="M1 8H31.2" stroke="#c4c4c4" stroke-width="2"/><path d="M1 3.2Q1 1 3.2 1H8.6Q9.8 1 10.5 1.9L11.7 3.3Q12.3 4 13.4 4H29Q31.2 4 31.2 6.2V24.2Q31.2 26.4 29 26.4H3.2Q1 26.4 1 24.2Z" fill="none" stroke="#c4c4c4" stroke-width="2.1" stroke-linejoin="round"/></svg>
<span class="t " style="left:270.59px;top:1079.99px;font-size:26px;letter-spacing:-0.471px;color:#ececec;">_SB.PCI0....</span>
<svg style="position:absolute;left:190.7px;top:1124.75px" width="15.2" height="18.5" viewBox="0 0 15.2 18.5"><path d="M0 0L15.2 9.25L0 18.5Z" fill="#b3b3b3"/></svg>
<svg style="position:absolute;left:217.9px;top:1120px;overflow:visible" width="32.2" height="27.4" viewBox="0 0 32.2 27.4"><path d="M1 3.2Q1 1 3.2 1H8.6Q9.8 1 10.5 1.9L11.7 3.3Q12.3 4 13.4 4H29Q31.2 4 31.2 6.2V24.2Q31.2 26.4 29 26.4H3.2Q1 26.4 1 24.2Z" fill="#40403e"/><path d="M1.6 8H30.6V24.2Q30.6 25.8 29 25.8H3.2Q1.6 25.8 1.6 24.2Z" fill="#5b5b5b"/><path d="M2 23H30.2V25.4H2Z" fill="#676767"/><path d="M1 8H31.2" stroke="#c4c4c4" stroke-width="2"/><path d="M1 3.2Q1 1 3.2 1H8.6Q9.8 1 10.5 1.9L11.7 3.3Q12.3 4 13.4 4H29Q31.2 4 31.2 6.2V24.2Q31.2 26.4 29 26.4H3.2Q1 26.4 1 24.2Z" fill="none" stroke="#c4c4c4" stroke-width="2.1" stroke-linejoin="round"/></svg>
<span class="t " style="left:270.59px;top:1119.99px;font-size:26px;letter-spacing:-0.471px;color:#ececec;">_SB.PCI0....</span>
<svg style="position:absolute;left:190.7px;top:1164.75px" width="15.2" height="18.5" viewBox="0 0 15.2 18.5"><path d="M0 0L15.2 9.25L0 18.5Z" fill="#b3b3b3"/></svg>
<svg style="position:absolute;left:217.9px;top:1160px;overflow:visible" width="32.2" height="27.4" viewBox="0 0 32.2 27.4"><path d="M1 3.2Q1 1 3.2 1H8.6Q9.8 1 10.5 1.9L11.7 3.3Q12.3 4 13.4 4H29Q31.2 4 31.2 6.2V24.2Q31.2 26.4 29 26.4H3.2Q1 26.4 1 24.2Z" fill="#40403e"/><path d="M1.6 8H30.6V24.2Q30.6 25.8 29 25.8H3.2Q1.6 25.8 1.6 24.2Z" fill="#5b5b5b"/><path d="M2 23H30.2V25.4H2Z" fill="#676767"/><path d="M1 8H31.2" stroke="#c4c4c4" stroke-width="2"/><path d="M1 3.2Q1 1 3.2 1H8.6Q9.8 1 10.5 1.9L11.7 3.3Q12.3 4 13.4 4H29Q31.2 4 31.2 6.2V24.2Q31.2 26.4 29 26.4H3.2Q1 26.4 1 24.2Z" fill="none" stroke="#c4c4c4" stroke-width="2.1" stroke-linejoin="round"/></svg>
<span class="t " style="left:270.59px;top:1159.99px;font-size:26px;letter-spacing:-0.471px;color:#ececec;">_SB.PCI0....</span>
<svg style="position:absolute;left:190.7px;top:1204.75px" width="15.2" height="18.5" viewBox="0 0 15.2 18.5"><path d="M0 0L15.2 9.25L0 18.5Z" fill="#b3b3b3"/></svg>
<svg style="position:absolute;left:217.9px;top:1200px;overflow:visible" width="32.2" height="27.4" viewBox="0 0 32.2 27.4"><path d="M1 3.2Q1 1 3.2 1H8.6Q9.8 1 10.5 1.9L11.7 3.3Q12.3 4 13.4 4H29Q31.2 4 31.2 6.2V24.2Q31.2 26.4 29 26.4H3.2Q1 26.4 1 24.2Z" fill="#40403e"/><path d="M1.6 8H30.6V24.2Q30.6 25.8 29 25.8H3.2Q1.6 25.8 1.6 24.2Z" fill="#5b5b5b"/><path d="M2 23H30.2V25.4H2Z" fill="#676767"/><path d="M1 8H31.2" stroke="#c4c4c4" stroke-width="2"/><path d="M1 3.2Q1 1 3.2 1H8.6Q9.8 1 10.5 1.9L11.7 3.3Q12.3 4 13.4 4H29Q31.2 4 31.2 6.2V24.2Q31.2 26.4 29 26.4H3.2Q1 26.4 1 24.2Z" fill="none" stroke="#c4c4c4" stroke-width="2.1" stroke-linejoin="round"/></svg>
<span class="t " style="left:270.59px;top:1199.99px;font-size:26px;letter-spacing:-0.471px;color:#ececec;">_SB.PCI0....</span>
<svg style="position:absolute;left:190.7px;top:1244.75px" width="15.2" height="18.5" viewBox="0 0 15.2 18.5"><path d="M0 0L15.2 9.25L0 18.5Z" fill="#b3b3b3"/></svg>
<svg style="position:absolute;left:217.9px;top:1240px;overflow:visible" width="32.2" height="27.4" viewBox="0 0 32.2 27.4"><path d="M1 3.2Q1 1 3.2 1H8.6Q9.8 1 10.5 1.9L11.7 3.3Q12.3 4 13.4 4H29Q31.2 4 31.2 6.2V24.2Q31.2 26.4 29 26.4H3.2Q1 26.4 1 24.2Z" fill="#40403e"/><path d="M1.6 8H30.6V24.2Q30.6 25.8 29 25.8H3.2Q1.6 25.8 1.6 24.2Z" fill="#5b5b5b"/><path d="M2 23H30.2V25.4H2Z" fill="#676767"/><path d="M1 8H31.2" stroke="#c4c4c4" stroke-width="2"/><path d="M1 3.2Q1 1 3.2 1H8.6Q9.8 1 10.5 1.9L11.7 3.3Q12.3 4 13.4 4H29Q31.2 4 31.2 6.2V24.2Q31.2 26.4 29 26.4H3.2Q1 26.4 1 24.2Z" fill="none" stroke="#c4c4c4" stroke-width="2.1" stroke-linejoin="round"/></svg>
<span class="t " style="left:270.59px;top:1239.99px;font-size:26px;letter-spacing:-0.471px;color:#ececec;">_SB.PCI0....</span>
<svg style="position:absolute;left:190.7px;top:1284.75px" width="15.2" height="18.5" viewBox="0 0 15.2 18.5"><path d="M0 0L15.2 9.25L0 18.5Z" fill="#b3b3b3"/></svg>
<svg style="position:absolute;left:217.9px;top:1280px;overflow:visible" width="32.2" height="27.4" viewBox="0 0 32.2 27.4"><path d="M1 3.2Q1 1 3.2 1H8.6Q9.8 1 10.5 1.9L11.7 3.3Q12.3 4 13.4 4H29Q31.2 4 31.2 6.2V24.2Q31.2 26.4 29 26.4H3.2Q1 26.4 1 24.2Z" fill="#40403e"/><path d="M1.6 8H30.6V24.2Q30.6 25.8 29 25.8H3.2Q1.6 25.8 1.6 24.2Z" fill="#5b5b5b"/><path d="M2 23H30.2V25.4H2Z" fill="#676767"/><path d="M1 8H31.2" stroke="#c4c4c4" stroke-width="2"/><path d="M1 3.2Q1 1 3.2 1H8.6Q9.8 1 10.5 1.9L11.7 3.3Q12.3 4 13.4 4H29Q31.2 4 31.2 6.2V24.2Q31.2 26.4 29 26.4H3.2Q1 26.4 1 24.2Z" fill="none" stroke="#c4c4c4" stroke-width="2.1" stroke-linejoin="round"/></svg>
<span class="t " style="left:270.59px;top:1279.99px;font-size:26px;letter-spacing:-0.471px;color:#ececec;">_SB.PCI0....</span>
<svg style="position:absolute;left:190.7px;top:1324.75px" width="15.2" height="18.5" viewBox="0 0 15.2 18.5"><path d="M0 0L15.2 9.25L0 18.5Z" fill="#b3b3b3"/></svg>
<svg style="position:absolute;left:217.9px;top:1320px;overflow:visible" width="32.2" height="27.4" viewBox="0 0 32.2 27.4"><path d="M1 3.2Q1 1 3.2 1H8.6Q9.8 1 10.5 1.9L11.7 3.3Q12.3 4 13.4 4H29Q31.2 4 31.2 6.2V24.2Q31.2 26.4 29 26.4H3.2Q1 26.4 1 24.2Z" fill="#40403e"/><path d="M1.6 8H30.6V24.2Q30.6 25.8 29 25.8H3.2Q1.6 25.8 1.6 24.2Z" fill="#5b5b5b"/><path d="M2 23H30.2V25.4H2Z" fill="#676767"/><path d="M1 8H31.2" stroke="#c4c4c4" stroke-width="2"/><path d="M1 3.2Q1 1 3.2 1H8.6Q9.8 1 10.5 1.9L11.7 3.3Q12.3 4 13.4 4H29Q31.2 4 31.2 6.2V24.2Q31.2 26.4 29 26.4H3.2Q1 26.4 1 24.2Z" fill="none" stroke="#c4c4c4" stroke-width="2.1" stroke-linejoin="round"/></svg>
<span class="t " style="left:270.59px;top:1319.99px;font-size:26px;letter-spacing:-0.471px;color:#ececec;">_SB.PCI0....</span>
<svg style="position:absolute;left:190.7px;top:1364.75px" width="15.2" height="18.5" viewBox="0 0 15.2 18.5"><path d="M0 0L15.2 9.25L0 18.5Z" fill="#b3b3b3"/></svg>
<svg style="position:absolute;left:217.9px;top:1360px;overflow:visible" width="32.2" height="27.4" viewBox="0 0 32.2 27.4"><path d="M1 3.2Q1 1 3.2 1H8.6Q9.8 1 10.5 1.9L11.7 3.3Q12.3 4 13.4 4H29Q31.2 4 31.2 6.2V24.2Q31.2 26.4 29 26.4H3.2Q1 26.4 1 24.2Z" fill="#40403e"/><path d="M1.6 8H30.6V24.2Q30.6 25.8 29 25.8H3.2Q1.6 25.8 1.6 24.2Z" fill="#5b5b5b"/><path d="M2 23H30.2V25.4H2Z" fill="#676767"/><path d="M1 8H31.2" stroke="#c4c4c4" stroke-width="2"/><path d="M1 3.2Q1 1 3.2 1H8.6Q9.8 1 10.5 1.9L11.7 3.3Q12.3 4 13.4 4H29Q31.2 4 31.2 6.2V24.2Q31.2 26.4 29 26.4H3.2Q1 26.4 1 24.2Z" fill="none" stroke="#c4c4c4" stroke-width="2.1" stroke-linejoin="round"/></svg>
<span class="t " style="left:270.59px;top:1359.99px;font-size:26px;letter-spacing:-0.471px;color:#ececec;">_SB.PCI0....</span>
<svg style="position:absolute;left:190.7px;top:1404.75px" width="15.2" height="18.5" viewBox="0 0 15.2 18.5"><path d="M0 0L15.2 9.25L0 18.5Z" fill="#b3b3b3"/></svg>
<svg style="position:absolute;left:217.9px;top:1400px;overflow:visible" width="32.2" height="27.4" viewBox="0 0 32.2 27.4"><path d="M1 3.2Q1 1 3.2 1H8.6Q9.8 1 10.5 1.9L11.7 3.3Q12.3 4 13.4 4H29Q31.2 4 31.2 6.2V24.2Q31.2 26.4 29 26.4H3.2Q1 26.4 1 24.2Z" fill="#40403e"/><path d="M1.6 8H30.6V24.2Q30.6 25.8 29 25.8H3.2Q1.6 25.8 1.6 24.2Z" fill="#5b5b5b"/><path d="M2 23H30.2V25.4H2Z" fill="#676767"/><path d="M1 8H31.2" stroke="#c4c4c4" stroke-width="2"/><path d="M1 3.2Q1 1 3.2 1H8.6Q9.8 1 10.5 1.9L11.7 3.3Q12.3 4 13.4 4H29Q31.2 4 31.2 6.2V24.2Q31.2 26.4 29 26.4H3.2Q1 26.4 1 24.2Z" fill="none" stroke="#c4c4c4" stroke-width="2.1" stroke-linejoin="round"/></svg>
<span class="t " style="left:270.59px;top:1399.99px;font-size:26px;letter-spacing:-0.471px;color:#ececec;">_SB.PCI0....</span>
</div></div>
<div style="position:absolute;left:458px;top:232px;width:18px;height:1222px;background:#3a3a3a;"></div>
<div style="position:absolute;left:461px;top:838px;width:12px;height:12px;border-radius:50%;background:#515151"></div>
<div style="position:absolute;left:476px;top:232px;width:1736px;height:1224px;background:#727272;"></div>
<div style="position:absolute;left:478px;top:234px;width:1732px;height:63px;background:#3c3c3c;"></div>
<div style="position:absolute;left:478px;top:297px;width:1732px;height:1px;background:#6a6a6a;"></div>
<div style="position:absolute;left:478px;top:298px;width:88px;height:1156px;background:#3b3b3b;"></div>
<div style="position:absolute;left:566px;top:298px;width:2px;height:1156px;background:#4c4c4c;"></div>
<div style="position:absolute;left:568px;top:298px;width:1612px;height:1126px;background:#242730;"></div>
<div style="position:absolute;left:2180px;top:298px;width:30px;height:1156px;background:#444;"></div>
<div style="position:absolute;left:2180px;top:298px;width:1px;height:1126px;background:#525252;"></div>
<div style="position:absolute;left:568px;top:1424px;width:1642px;height:30px;background:#444;"></div>
<div style="position:absolute;left:568px;top:1424px;width:1612px;height:1px;background:#525252;"></div>
<div style="position:absolute;left:2188px;top:649px;width:16px;height:37px;background:#818181;border-radius:8px;box-shadow:0 0 0 1px rgba(0,0,0,.25);"></div>
<div style="position:absolute;left:575px;top:1432px;width:43px;height:16px;background:#818181;border-radius:8px;box-shadow:0 0 0 1px rgba(0,0,0,.25);"></div>
<div style="position:absolute;left:489px;top:242px;width:1390px;height:48px;background:#1f769f;border-radius:13px;"></div>
<div style="position:absolute;left:496px;top:249px;width:1376px;height:34px;background:#484848;border-radius:7px;"></div>
<svg style="position:absolute;left:504px;top:252px" width="40" height="30" viewBox="0 0 40 30"><circle cx="12.4" cy="13.4" r="7.9" fill="none" stroke="#e6e6e6" stroke-width="2"/><path d="M18.2 19.2L24.6 25.4" stroke="#e6e6e6" stroke-width="2.2" stroke-linecap="round"/><path d="M25.2 11.6L28.9 15.4L32.7 11.6" fill="none" stroke="#e6e6e6" stroke-width="2.1" stroke-linecap="round" stroke-linejoin="round"/></svg>
<div style="position:absolute;left:546px;top:253px;width:62px;height:28px;background:#3d6389;"></div>
<span class="t " style="left:545.80px;top:256.38px;font-size:22px;letter-spacing:-0.191px;color:#fff;">RHUB</span>
<span class="t " style="left:1810.92px;top:256.38px;font-size:22px;letter-spacing:0.912px;color:#7d7d7d;">12</span>
<svg style="position:absolute;left:1844px;top:255px" width="22" height="22" viewBox="0 0 22 22"><circle cx="11" cy="11" r="11" fill="#b5b5b5"/><path d="M6.6 6.6L15.4 15.4M15.4 6.6L6.6 15.4" stroke="#3e3e3e" stroke-width="2.3" stroke-linecap="round"/></svg>
<div style="position:absolute;left:1890px;top:250px;width:70px;height:32px;background:transparent;border-radius:8px;box-shadow:inset 0 0 0 1.5px #737373;"></div>
<div style="position:absolute;left:1924px;top:251px;width:2px;height:30px;background:#737373;"></div>
<svg style="position:absolute;left:1890px;top:250px" width="70" height="32" viewBox="0 0 70 32"><path d="M20.6 9.3L10.4 15.1L20.6 20.9M48.4 9.3L58.6 15.1L48.4 20.9" fill="none" stroke="#e4e4e4" stroke-width="2"/></svg>
<div style="position:absolute;left:1976px;top:250px;width:84px;height:32px;background:transparent;border-radius:8px;box-shadow:inset 0 0 0 1.5px #737373;"></div>
<span class="t " style="left:1989.80px;top:256.38px;font-size:22px;letter-spacing:0.996px;color:#e6e6e6;">Done</span>
<div style="position:absolute;left:2076px;top:254px;width:24px;height:24px;background:linear-gradient(#636363,#525252);border-radius:5px;box-shadow:0 1px 1px rgba(0,0,0,.35);"></div>
<span class="t " style="left:2109.60px;top:256.38px;font-size:22px;letter-spacing:0.411px;color:#e6e6e6;">Replace</span>
<pre class="ln">11259
11260
11261
11262
11263
11264
11265
11266
11267
11268
11269
11270
11271
11272
11273
11274
11275
11276
11277
11278
11279
11280
11281
11282
11283
11284
11285
11286
11287
11288
11289
11290
11291
11292
11293
11294
11295
11296
11297
11298
11299
11300
11301
11302</pre>
<div style="position:absolute;left:568px;top:298px;width:1612px;height:1126px;overflow:hidden"><div style="position:absolute;left:-568px;top:-298px">
<pre class="code">                REV = <span class="n">0x02</span>
                <span class="k">CreateField</span> (<span class="k">DerefOf</span> (PCKG [<span class="n">Zero</span>]), <span class="n">0x40</span>, <span class="n">One</span>, VISI)
                VISI = <span class="m">Arg0</span>
                <span class="k">CreateField</span> (<span class="k">DerefOf</span> (PCKG [<span class="n">Zero</span>]), <span class="n">0x57</span>, <span class="n">0x08</span>, GPOS)
                GPOS = <span class="m">Arg1</span>
                <span class="k">Return</span> (PCKG) <span class="c">/* \_SB_.PCI0.XHC_.GPLD.PCKG */</span>
            }

            <span class="k">Device</span> (RHUB)
            {
                <span class="k">Name</span> (_ADR, <span class="n">Zero</span>)  <span class="c">// _ADR: Address</span>
                <span class="k">Method</span> (_PS0, <span class="n">0</span>, <span class="m">Serialized</span>)  <span class="c">// _PS0: Power State 0</span>
                {
                    <span class="k">If</span> ((DVID == <span class="n">0xFFFF</span>))
                    {
                        <span class="k">Return</span> (<span class="n">Zero</span>)
                    }

                    <span class="k">If</span> (<span class="k">CondRefOf</span> (\_SB.PCI0.XHC.<span class="hl">RHUB</span>.PS0X))
                    {
                        PS0X ()
                    }
                }

                <span class="k">Method</span> (_PS2, <span class="n">0</span>, <span class="m">Serialized</span>)  <span class="c">// _PS2: Power State 2</span>
                {
                    <span class="k">If</span> ((DVID == <span class="n">0xFFFF</span>))
                    {
                        <span class="k">Return</span> (<span class="n">Zero</span>)
                    }

                    <span class="k">If</span> (<span class="k">CondRefOf</span> (\_SB.PCI0.XHC.<span class="hl">RHUB</span>.PS2X))
                    {
                        PS2X ()
                    }
                }

                <span class="k">Method</span> (_PS3, <span class="n">0</span>, <span class="m">Serialized</span>)  <span class="c">// _PS3: Power State 3</span>
                {
                    <span class="k">If</span> ((DVID == <span class="n">0xFFFF</span>))
                    {
                        <span class="k">Return</span> (<span class="n">Zero</span>)
                    }</pre>
<div style="position:absolute;left:824px;top:504px;width:70px;height:34px;background:#fefe45;box-shadow:0 1px 3px rgba(0,0,0,.6)"></div>
<span class="t" style="left:831.9px;top:508px;font-family:&quot;DejaVu Sans Mono&quot;,&quot;Liberation Mono&quot;,monospace;font-size:22px;line-height:26px;color:#000">RHUB</span>
</div></div>
<div style="position:absolute;left:114px;top:1412px;width:344px;height:42px;background:#3a3a3a;"></div>
<div style="position:absolute;left:117px;top:1415px;width:336px;height:36px;background:#464646;border-radius:6px;box-shadow:inset 0 0 0 1px #575757;"></div>
<div style="position:absolute;left:456px;top:1412px;width:2px;height:42px;background:#505050;"></div>
<div style="position:absolute;left:112px;top:1454px;width:364px;height:2px;background:#515151;"></div>
<div style="position:absolute;left:112px;top:1456px;width:2100px;height:40px;background:#383838;"></div>
<div style="position:absolute;left:112px;top:1456px;width:2100px;height:40px;box-sizing:border-box;border:2px solid #636363;border-top:none;border-bottom-width:1px;border-radius:0 0 9px 9px"></div>
<span class="t " style="left:161.40px;top:1423.98px;font-size:22px;letter-spacing:0.555px;color:#7e7e7e;">Filter Tree</span>
<svg style="position:absolute;left:126px;top:1420px" width="30" height="30" viewBox="0 0 30 30"><circle cx="12.7" cy="12.6" r="8" fill="none" stroke="#dcdcdc" stroke-width="2"/><path d="M18.6 18.4L25 24.6" stroke="#dcdcdc" stroke-width="2.2" stroke-linecap="round"/></svg>
<span class="t " style="left:151.53px;top:1463.68px;font-size:24px;letter-spacing:-0.438px;color:#e0e0e0;">DSDT</span>
<span class="t " style="left:240.96px;top:1463.68px;font-size:24px;letter-spacing:-2.321px;color:#e0e0e0;">_GPE</span>
<span class="t " style="left:323.36px;top:1463.68px;font-size:24px;letter-spacing:-0.526px;color:#e0e0e0;">_SB.PCI0.RP01.PXSX</span>
<span class="t " style="left:581.33px;top:1463.68px;font-size:24px;letter-spacing:0.522px;color:#e0e0e0;">EP02</span>
<span class="t " style="left:666.76px;top:1463.68px;font-size:24px;letter-spacing:0.174px;color:#e0e0e0;">TXHC</span>
<svg style="position:absolute;left:225.4px;top:1473px" width="8" height="9" viewBox="0 0 8 9"><path d="M0 0.5L7 4.4L0 8.3Z" fill="#8c8c8c"/></svg>
<svg style="position:absolute;left:307.3px;top:1473px" width="8" height="9" viewBox="0 0 8 9"><path d="M0 0.5L7 4.4L0 8.3Z" fill="#8c8c8c"/></svg>
<svg style="position:absolute;left:567.2px;top:1473px" width="8" height="9" viewBox="0 0 8 9"><path d="M0 0.5L7 4.4L0 8.3Z" fill="#8c8c8c"/></svg>
<svg style="position:absolute;left:650.8px;top:1473px" width="8" height="9" viewBox="0 0 8 9"><path d="M0 0.5L7 4.4L0 8.3Z" fill="#8c8c8c"/></svg>
<div style="position:absolute;left:112px;top:78px;width:2px;height:153px;background:#6c6c6c;"></div>
<div style="position:absolute;left:112px;top:232px;width:1px;height:1264px;background:#909090;"></div>
<div style="position:absolute;left:113px;top:232px;width:1px;height:1264px;background:#7c7c7c;"></div>
<div style="position:absolute;left:2210px;top:78px;width:2px;height:153px;background:#6c6c6c;"></div>
<div style="position:absolute;left:2210px;top:232px;width:1px;height:1264px;background:#7c7c7c;"></div>
<div style="position:absolute;left:2211px;top:232px;width:1px;height:1264px;background:#909090;"></div>
</div></div></div></div>
</body></html>
